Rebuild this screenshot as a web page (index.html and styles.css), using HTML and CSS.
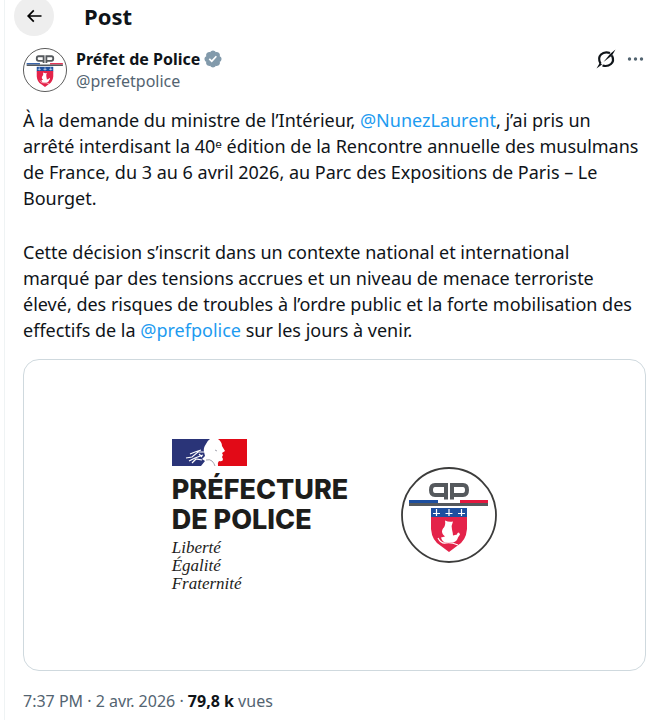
FILE: index.html
```html
<!DOCTYPE html>
<html lang="fr">
<head>
    <meta charset="UTF-8">
    <meta name="viewport" content="width=device-width, initial-scale=1.0">
    <title>Post</title>
    <link rel="stylesheet" href="styles.css">
</head>
<body>
    <svg class="symbols" aria-hidden="true">
        <symbol id="emblem" viewBox="0 0 96 96">
            <circle cx="48" cy="48" r="47" fill="#fff" stroke="#3c3c3b" stroke-width="1.800"/>
            <g fill="none" stroke="#55595d" stroke-width="4">
                <path d="M45 32.500V18H34q-4 0-4 5t4 5h11"/>
                <path d="M51 32.500V18H62q4 0 4 5t-4 5h-11"/>
            </g>
            <path fill="#1d4f9f" d="M8 33h29v3H8z"/>
            <path fill="#e4183f" d="M59 33h28v3H59z"/>
            <path fill="#55595d" d="M8 36h79v3H8z"/>
            <path fill="#1d4f9f" d="M30 41h36v10H30z"/>
            <path fill="#e4234a" d="M30 50h36v12q-1 12-10 17l-8 6-8-6q-9-5-10-17z"/>
            <path fill="none" stroke="#fff" stroke-width="1.200" d="M35.500 42v7M32 46.500h7M48 42v7M44.500 46.500h7M60.500 42v7M57 46.500h7"/>
            <path fill="#fff" d="M44 53.500q4 2 8 1-2 4-1 8t1 6l4-1q0-2 2-2l1 2-2 3q-1 4-5 5H44q-3-1-4-5l4-1-2-2q-2-3 0-6 3-3 2-8z"/>
            <path fill="none" stroke="#fff" stroke-width="1.200" d="M37 71q3 6 8 5t12 2"/>
        </symbol>
    </svg>

    <main class="column">
        <header class="topbar">
            <button class="back" type="button" aria-label="Retour">
                <svg width="20" height="20" viewBox="0 0 24 24"><path d="M7.414 13l5.043 5.040-1.414 1.420L3.586 12l7.457-7.460 1.414 1.420L7.414 11H21v2H7.414z"/></svg>
            </button>
            <h1>Post</h1>
        </header>

        <article class="post">
            <div class="author">
                <svg class="avatar" role="img" aria-label="Préfet de Police"><use href="#emblem"/></svg>
                <div class="names">
                    <div class="name">
                        <a href="#">Préfet de Police</a>
                        <svg class="badge" viewBox="0 0 22 22"><path d="M20.396 11c-.018-.646-.215-1.275-.570-1.816-.354-.540-.852-.972-1.438-1.246.223-.607.270-1.264.140-1.897-.131-.634-.437-1.218-.882-1.687-.470-.445-1.053-.750-1.687-.882-.633-.130-1.290-.083-1.897.140-.273-.587-.704-1.086-1.245-1.440S11.647 1.620 11 1.604c-.646.017-1.273.213-1.813.568s-.969.854-1.240 1.440c-.608-.223-1.267-.272-1.902-.140-.635.130-1.220.436-1.690.882-.445.470-.749 1.055-.878 1.688-.130.633-.080 1.290.144 1.896-.587.274-1.087.705-1.443 1.245-.356.540-.555 1.170-.574 1.817.020.647.218 1.276.574 1.817.356.540.856.972 1.443 1.245-.224.606-.274 1.263-.144 1.896.130.634.433 1.218.877 1.688.470.443 1.054.747 1.687.878.633.132 1.290.084 1.897-.136.274.586.705 1.084 1.246 1.439.540.354 1.170.551 1.816.569.647-.016 1.276-.213 1.817-.567s.972-.854 1.245-1.440c.604.239 1.266.296 1.903.164.636-.132 1.220-.447 1.680-.907.460-.460.776-1.044.908-1.681s.075-1.299-.165-1.903c.586-.274 1.084-.705 1.439-1.246.354-.540.551-1.170.569-1.816zM9.662 14.850l-3.429-3.428 1.293-1.302 2.072 2.072 4.400-4.794 1.347 1.246z"/></svg>
                    </div>
                    <a class="handle" href="#">@prefetpolice</a>
                </div>
                <div class="actions">
                    <button type="button" aria-label="Grok">
                        <svg width="20" height="20" viewBox="0 0 20 20">
                            <path fill="none" stroke="#0f1419" stroke-width="2.200" d="M4.500 14.500Q1.500 9 5 5.500T14 4M16 6.500Q18.500 12 15 15T6.500 16.500"/>
                            <path fill="#0f1419" d="M19.500 0.500L16 6.500 7.500 13 14 5zM0.500 19.500L4 13.500 6 15.500z"/>
                        </svg>
                    </button>
                    <button type="button" aria-label="Plus">
                        <svg width="20" height="20" viewBox="0 0 20 20" fill="#536471"><circle cx="3.500" cy="10" r="1.700"/><circle cx="9.500" cy="10" r="1.700"/><circle cx="15.500" cy="10" r="1.700"/></svg>
                    </button>
                </div>
            </div>

            <div class="text">
                <p>À la demande du ministre de l’Intérieur, <a href="#">@NunezLaurent</a>, j’ai pris un<br>
                arrêté interdisant la 40ᵉ édition de la Rencontre annuelle des musulmans<br>
                de France, du 3 au 6 avril 2026, au Parc des Expositions de Paris – Le<br>
                Bourget.</p>
                <p>Cette décision s’inscrit dans un contexte national et international<br>
                marqué par des tensions accrues et un niveau de menace terroriste<br>
                élevé, des risques de troubles à l’ordre public et la forte mobilisation des<br>
                effectifs de la <a href="#">@prefpolice</a> sur les jours à venir.</p>
            </div>

            <div class="media">
                <div class="prefecture">
                    <svg class="flag" viewBox="0 0 75 27">
                        <path fill="#fff" d="M0 0h75v27H0z"/>
                        <path fill="#2a3478" d="M0 0h38q-3 2-4 5-3 4-2 8l1 4-3 3 3 2-4 5H0z"/>
                        <path fill="#e20a17" d="M46 0h29v27H46q-1-3 1-5 4 1 4-2l-1-2 1-2-1-2 3-2-3-5q0-4-4-7z"/>
                        <path fill="none" stroke="#fff" stroke-width="1.200" d="M14 19l6-1 6-5 6 0M18 15l5-2 6-2M17 22l6-3 8-3M20 24l4-4 6 1M27 15l3 3"/>
                        <path fill="none" stroke="#8b8d99" stroke-width="0.800" d="M34 21q4-1 6 1t3 5M43 11l2 1"/>
                    </svg>
                    <div class="title">PRÉFECTURE<br>DE POLICE</div>
                    <div class="motto">Liberté<br>Égalité<br>Fraternité</div>
                </div>
                <svg class="seal" role="img" aria-label="PP"><use href="#emblem"/></svg>
            </div>

            <div class="meta">
                <a href="#">7:37 PM · 2 avr. 2026</a> · <strong>79,8 k</strong> vues
            </div>
        </article>
    </main>
</body>
</html>
```
FILE: styles.css
```css
* {
    box-sizing: border-box;
}
body {
    margin: 0;
    background-color: #fff;
    color: #0f1419;
    font-family: "Noto Sans", sans-serif;
    font-size: 18px;
}
a {
    color: inherit;
    text-decoration: none;
}
button {
    display: flex;
    align-items: center;
    justify-content: center;
    padding: 0;
    border: none;
    background: none;
    cursor: pointer;
}
.symbols {
    position: absolute;
    width: 0;
    height: 0;
}
.column {
    margin-left: 4px;
    padding: 0 12px 8px 18px;
    border-left: 1px solid #eff3f4;
}
.topbar {
    display: flex;
    align-items: center;
    gap: 30px;
    margin: -4px 0 0 -9px;
}
.back {
    width: 40px;
    height: 40px;
    border-radius: 50%;
    background-color: #eee;
}
h1 {
    margin: 0;
    font-size: 22px;
    line-height: 26px;
}
.author {
    display: flex;
    margin-top: 12px;
}
.avatar {
    width: 44px;
    height: 44px;
    margin-right: 9px;
}
.names {
    font-size: 16px;
    line-height: 22px;
}
.name {
    display: flex;
    align-items: center;
    gap: 3px;
    font-weight: bold;
}
.badge {
    width: 20px;
    height: 20px;
    fill: #829aab;
}
.handle {
    color: #536471;
}
.actions {
    display: flex;
    gap: 10px;
    height: 22px;
    margin-left: auto;
}
.text {
    margin-top: 15px;
    line-height: 26px;
}
.text p {
    margin: 0 0 28px;
}
.text p:last-child {
    margin-bottom: 0;
}
.text a {
    color: #1d9bf0;
}
.media {
    display: flex;
    align-items: center;
    justify-content: center;
    gap: 53px;
    aspect-ratio: 2 / 1;
    margin-top: 16px;
    border: 1px solid #cfd9de;
    border-radius: 16px;
}
.prefecture {
    padding-top: 3px;
    color: #1d1d1b;
}
.flag {
    display: block;
    width: 75px;
    height: 27px;
}
.title {
    margin-top: 9px;
    font-family: Inter, sans-serif;
    font-size: 27px;
    font-weight: 800;
    line-height: 30px;
}
.motto {
    margin-top: 4px;
    font-family: "Liberation Serif", serif;
    font-size: 17px;
    font-style: italic;
    line-height: 18px;
}
.seal {
    width: 96px;
    height: 96px;
}
.meta {
    margin-top: 19px;
    color: #536471;
    font-size: 16px;
    line-height: 22px;
}
.meta strong {
    color: #0f1419;
}
```
